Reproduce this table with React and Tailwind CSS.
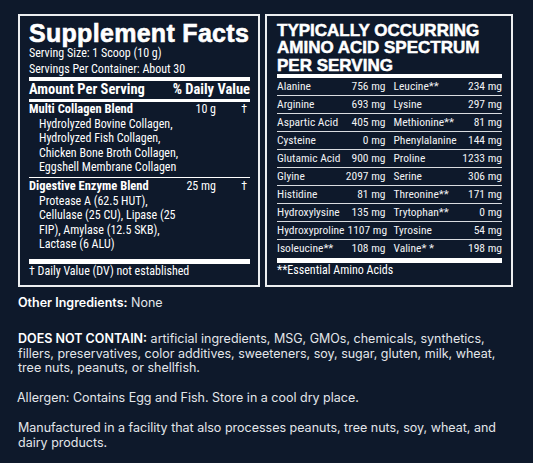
import React from 'react';

// condensed label face
const NARROW = "font-['Roboto_Condensed','Liberation_Sans_Narrow','DejaVu_Sans_Condensed',sans-serif]";

const aminos = [
  ['Alanine', '756 mg', 'Leucine**', '234 mg'],
  ['Arginine', '693 mg', 'Lysine', '297 mg'],
  ['Aspartic Acid', '405 mg', 'Methionine**', '81 mg'],
  ['Cysteine', '0 mg', 'Phenylalanine', '144 mg'],
  ['Glutamic Acid', '900 mg', 'Proline', '1233 mg'],
  ['Glyine', '2097 mg', 'Serine', '306 mg'],
  ['Histidine', '81 mg', 'Threonine**', '171 mg'],
  ['Hydroxylysine', '135 mg', 'Trytophan**', '0 mg'],
  ['Hydroxyproline', '1107 mg', 'Tyrosine', '54 mg'],
  ['Isoleucine**', '108 mg', 'Valine* *', '198 mg'],
];

const Blend = ({ name, amount, lines, className = '' }) => (
  <div className={className}>
    <div className="flex leading-[14.5px]">
      <span className="flex-1 text-[12.5px] font-bold">{name}</span>
      <span className="text-[12px]">{amount}</span>
      <span className="w-[34px] pr-[3px] text-right text-[12px]">†</span>
    </div>
    {lines.map((l) => (
      <div key={l} className="pl-[10px] text-[12px] leading-[14.5px]">
        {l}
      </div>
    ))}
  </div>
);

const SupplementFacts = () => (
  <div className={`h-[273px] w-[242px] shrink-0 border-2 border-[#eceef0] pl-[9px] pr-[8px] ${NARROW}`}>
    <h1 className="whitespace-nowrap pt-[5px] font-['Liberation_Sans',sans-serif] text-[25px] font-bold leading-[25px] tracking-[0.3px] [-webkit-text-stroke:0.6px_white]">
      Supplement Facts
    </h1>
    <div className="text-[12px] leading-[14px]">Serving Size: 1 Scoop (10 g)</div>
    <div className="mt-[2px] text-[12px] leading-[14px]">Servings Per Container: About 30</div>
    <div className="mt-[1px] h-[4px] bg-white" />
    <div className="flex justify-between whitespace-nowrap text-[14.5px] font-bold leading-[18px]">
      <span>Amount Per Serving</span>
      <span>% Daily Value</span>
    </div>
    <div className="h-[3px] bg-white" />
    <Blend
      name="Multi Collagen Blend"
      amount="10 g"
      lines={[
        'Hydrolyzed Bovine Collagen,',
        'Hydrolyzed Fish Collagen,',
        'Chicken Bone Broth Collagen,',
        'Eggshell Membrane Collagen',
      ]}
    />
    <div className="mt-[2px] h-[1.5px] bg-white" />
    <Blend
      className="mt-[1px]"
      name="Digestive Enzyme Blend"
      amount="25 mg"
      lines={['Protease A (62.5 HUT),', 'Cellulase (25 CU), Lipase (25', 'FIP), Amylase (12.5 SKB),', 'Lactase (6 ALU)']}
    />
    <div className="mt-[7px] h-[5px] bg-white" />
    <div className="text-[12px] leading-[14.5px]">† Daily Value (DV) not established</div>
  </div>
);

const AminoSpectrum = () => (
  <div className={`h-[273px] w-[248px] shrink-0 border-2 border-[#eceef0] pl-[10px] pr-[9px] ${NARROW}`}>
    <h2 className="whitespace-nowrap pt-[6px] font-['Liberation_Sans',sans-serif] text-[17px] font-bold leading-[17.3px] [-webkit-text-stroke:0.5px_white]">
      TYPICALLY OCCURRING
      <br />
      AMINO ACID SPECTRUM
      <br />
      PER SERVING
    </h2>
    <div className="h-[4px] bg-white" />
    {aminos.map((r, i) => (
      <div
        key={r[0]}
        className={`grid h-[18px] grid-cols-2 gap-x-[8px] whitespace-nowrap text-[11.5px] leading-[17px] text-[#f1f2f4] ${
          i < aminos.length - 1 ? 'border-b border-[#d9dce0]' : ''
        }`}
      >
        <div className="flex justify-between gap-[3px]">
          <span>{r[0]}</span>
          <span>{r[1]}</span>
        </div>
        <div className="flex justify-between gap-[3px]">
          <span>{r[2]}</span>
          <span>{r[3]}</span>
        </div>
      </div>
    ))}
    <div className="h-[5px] bg-white" />
    <div className="text-[12px] leading-[14.5px]">**Essential Amino Acids</div>
  </div>
);

export default function App() {
  return (
    <div className="min-h-[463px] w-[533px] bg-[#0e192b] text-white">
      <div className="flex gap-[5px] pl-[18px] pt-[14px]">
        <SupplementFacts />
        <AminoSpectrum />
      </div>
      <div className="pl-[18px] pr-[30px] font-['Inter',sans-serif] text-[12.5px] leading-[14.5px] text-[#e3e6ea]">
        <p className="mt-[8.5px]">
          <span className="font-semibold text-white">Other Ingredients:</span> None
        </p>
        <p className="mt-[22px]">
          <span className="font-semibold text-white">DOES NOT CONTAIN:</span> artificial ingredients, MSG, GMOs,
          chemicals, synthetics, fillers, preservatives, color additives, sweeteners, soy, sugar, gluten, milk, wheat,
          tree nuts, peanuts, or shellfish.
        </p>
        <p className="-ml-px mt-[15px]">Allergen: Contains Egg and Fish. Store in a cool dry place.</p>
        <p className="mt-[16px]">
          Manufactured in a facility that also processes peanuts, tree nuts, soy, wheat, and dairy products.
        </p>
      </div>
    </div>
  );
}
